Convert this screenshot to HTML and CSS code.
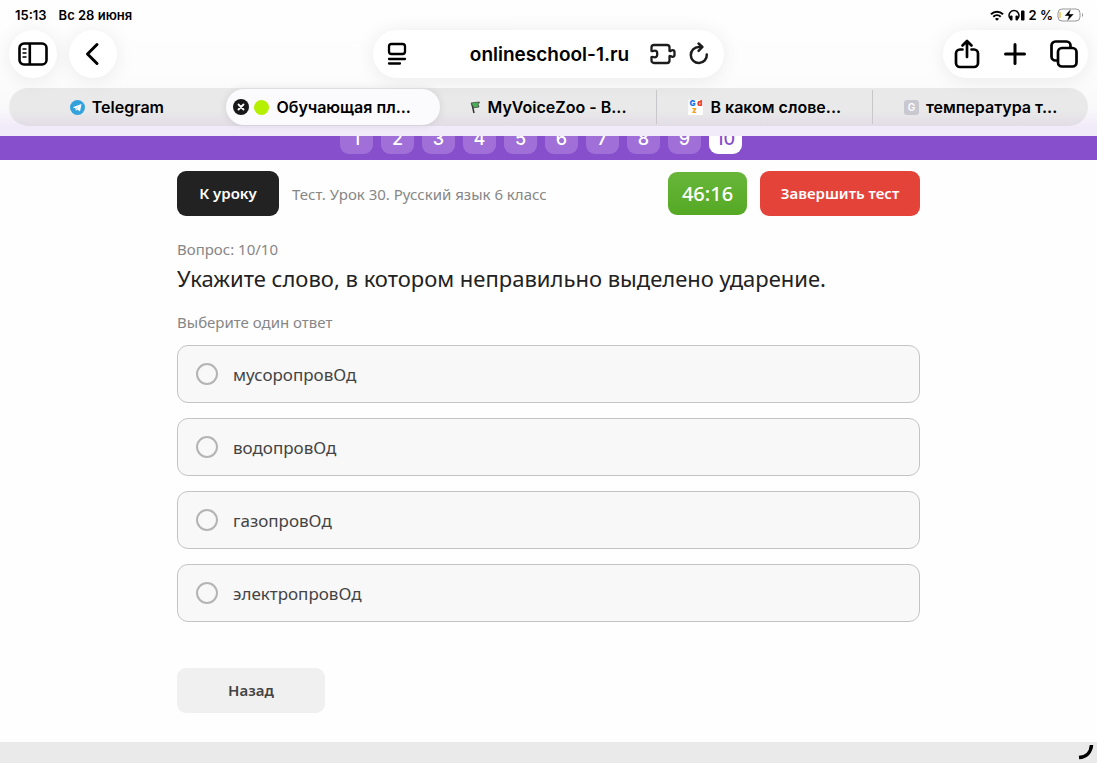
FILE: index.html
```html
<!DOCTYPE html>
<html lang="ru">
<head>
    <meta charset="UTF-8">
    <meta name="viewport" content="width=device-width, initial-scale=1.0">
    <title>Обучающая платформа</title>
    <link rel="stylesheet" href="styles.css">
</head>
<body>
    <header class="browser">
        <div class="status-bar">
            <div class="status-left">
                <span>15:13</span>
                <span>Вс 28 июня</span>
            </div>
            <div class="status-right">
                <svg width="14" height="11" viewBox="0 0 14 11" fill="none" stroke="#000" stroke-width="2">
                    <path d="M1 4.200C4.400.8 9.600.8 13 4.200"/>
                    <path d="M3.300 6.700c2.100-2 5.300-2 7.400 0"/>
                    <path d="M7 10.800 4.900 8.700c1.200-1.100 3-1.100 4.200 0z" fill="#000" stroke="none"/>
                </svg>
                <svg width="17" height="12" viewBox="0 0 17 12">
                    <path d="M3 10.500A5 5 0 1 1 9 10.500" fill="none" stroke="#000" stroke-width="1.500"/>
                    <rect x="2" y="6.500" width="2.500" height="5" rx="1"/>
                    <rect x="7.500" y="6.500" width="2.500" height="5" rx="1"/>
                    <rect x="13" y="1.500" width="3.500" height="10" rx="1"/>
                </svg>
                <span>2 %</span>
                <svg width="27" height="14" viewBox="0 0 27 14">
                    <rect x="1" y="1" width="22" height="12" rx="4" fill="#fff" stroke="#999"/>
                    <path d="M3 4v6" stroke="#f5c542" stroke-width="1.500"/>
                    <path d="M25 5c1.500.5 1.500 3.500 0 4z" fill="#999"/>
                    <path d="M14 .5 7.500 8h4.200L10 13.500 17 6h-4.500z" stroke="#fff" stroke-width=".4"/>
                </svg>
            </div>
        </div>

        <div class="toolbar">
            <div class="toolbar-side">
                <button class="round-button" type="button" aria-label="Боковая панель">
                    <svg width="30" height="24" viewBox="0 0 30 24" fill="none" stroke="#000">
                        <rect x="1.500" y="1.500" width="27" height="21" rx="4.500" stroke-width="2.600"/>
                        <path d="M11.800 2v20" stroke-width="2.600"/>
                        <path d="M4.500 7h4M4.500 11h4M4.500 15h4" stroke-width="1.500"/>
                    </svg>
                </button>
                <button class="round-button" type="button" aria-label="Назад">
                    <svg width="16" height="24" viewBox="0 0 16 24" fill="none" stroke="#000" stroke-width="3" stroke-linecap="round" stroke-linejoin="round">
                        <path d="M12 2.500 2.500 12 12 21.500"/>
                    </svg>
                </button>
            </div>

            <div class="address-bar">
                <button class="icon-button" type="button" aria-label="Меню страницы">
                    <svg width="20" height="24" viewBox="0 0 20 24" fill="none" stroke="#000" stroke-width="2.300" stroke-linecap="round">
                        <rect x="2" y="2" width="16" height="10" rx="2.500"/>
                        <path d="M2 17h16M2 21.500h11"/>
                    </svg>
                </button>
                <span class="address">onlineschool-1.ru</span>
                <div class="address-actions">
                    <button class="icon-button" type="button" aria-label="Расширения">
                        <svg width="26" height="22" viewBox="0 0 26 22" fill="none" stroke="#1c1c1c" stroke-width="2.300" stroke-linejoin="round">
                            <path d="M4 2h13a2.500 2.500 0 0 1 2.500 2.500V8c1.300.4 1.500-.8 3-.8a2 2 0 0 1 2 2v2.600a2 2 0 0 1-2 2c-1.500 0-1.700-1.200-3-.8v4.500a2.500 2.500 0 0 1-2.500 2.500H4a2.500 2.500 0 0 1-2.500-2.500V14c1.300-.6 1.700.3 3.200.3a2.500 2.500 0 0 0 2.500-2.500v-1.600a2.500 2.500 0 0 0-2.500-2.500c-1.500 0-1.900.9-3.200.3V4.500A2.500 2.500 0 0 1 4 2z"/>
                        </svg>
                    </button>
                    <button class="icon-button" type="button" aria-label="Обновить">
                        <svg width="20" height="24" viewBox="0 0 20 24" fill="none" stroke="#1c1c1c" stroke-width="2.500" stroke-linecap="round" stroke-linejoin="round">
                            <path d="M17.800 12.500A8 8 0 1 1 9.800 5h3.200"/>
                            <path d="M9.600 1.500 13.300 5 9.600 8.800"/>
                        </svg>
                    </button>
                </div>
            </div>

            <div class="toolbar-side toolbar-right">
                <div class="action-group">
                    <button class="icon-button" type="button" aria-label="Поделиться">
                        <svg width="26" height="30" viewBox="0 0 26 30" fill="none" stroke="#000" stroke-width="2.700" stroke-linecap="round" stroke-linejoin="round">
                            <path d="M8.500 10.500H6a4 4 0 0 0-4 4V24a4 4 0 0 0 4 4h14a4 4 0 0 0 4-4v-9.500a4 4 0 0 0-4-4h-2.500"/>
                            <path d="M13 18V2M8.500 6.500 13 2l4.500 4.500"/>
                        </svg>
                    </button>
                    <button class="icon-button" type="button" aria-label="Новая вкладка">
                        <svg width="22" height="22" viewBox="0 0 22 22" stroke="#000" stroke-width="3" stroke-linecap="round">
                            <path d="M11 1.500v19M1.500 11h19"/>
                        </svg>
                    </button>
                    <button class="icon-button" type="button" aria-label="Вкладки">
                        <svg width="28" height="28" viewBox="0 0 28 28" fill="none" stroke="#000" stroke-width="2.700">
                            <path d="M8 20.500H5.500a4 4 0 0 1-4-4v-11a4 4 0 0 1 4-4h11a4 4 0 0 1 4 4V8"/>
                            <rect x="8" y="8" width="18.500" height="18.500" rx="4"/>
                        </svg>
                    </button>
                </div>
            </div>
        </div>

        <nav class="tabs">
            <a class="tab" href="#">
                <svg width="15" height="15" viewBox="0 0 15 15">
                    <circle cx="7.500" cy="7.500" r="7.500" fill="#32a1dc"/>
                    <path d="M2.800 7.300 11.500 4 10 11.400 7.300 9.500 5.900 10.800 5.600 8.500z" fill="#fff"/>
                    <path d="M5.800 8.500 9.800 5.600 6.600 9z" fill="#9fcfeb"/>
                </svg>
                <span>Telegram</span>
            </a>
            <a class="tab active" href="#">
                <svg class="tab-close" width="16" height="16" viewBox="0 0 16 16">
                    <circle cx="8" cy="8" r="8" fill="#171719"/>
                    <path d="m5.500 5.500 5 5m0-5-5 5" stroke="#fff" stroke-width="1.800" stroke-linecap="round"/>
                </svg>
                <svg width="15" height="15" viewBox="0 0 15 15">
                    <circle cx="7.500" cy="7.500" r="7.500" fill="#b4f000"/>
                </svg>
                <span>Обучающая пл...</span>
            </a>
            <a class="tab" href="#">
                <svg width="10" height="15" viewBox="0 0 10 15">
                    <path d="M2 4 4 13" stroke="#333" stroke-width="1.500"/>
                    <path d="m1 3 3.500-.5L9.500 2 8.200 4.500l.8 2.500-5.500.8z" fill="#4eae58" stroke="#333" stroke-width=".7"/>
                </svg>
                <span>MyVoiceZoo - В...</span>
            </a>
            <a class="tab divided" href="#">
                <span class="favicon-gdz"><b class="blue">G</b><b class="red">d</b><b class="orange">z</b></span>
                <span>В каком слове...</span>
            </a>
            <a class="tab divided" href="#">
                <span class="favicon-letter">G</span>
                <span>температура т...</span>
            </a>
        </nav>
    </header>

    <nav class="question-nav" aria-label="Вопросы">
        <a href="#">1</a>
        <a href="#">2</a>
        <a href="#">3</a>
        <a href="#">4</a>
        <a href="#">5</a>
        <a href="#">6</a>
        <a href="#">7</a>
        <a href="#">8</a>
        <a href="#">9</a>
        <a class="current" href="#">10</a>
    </nav>

    <main class="test">
        <div class="test-header">
            <button class="button dark" type="button">К уроку</button>
            <span class="test-name">Тест. Урок 30. Русский язык 6 класс</span>
            <div class="timer">46:16</div>
            <button class="button danger" type="button">Завершить тест</button>
        </div>

        <p class="question-number">Вопрос: 10/10</p>
        <h1>Укажите слово, в котором неправильно выделено ударение.</h1>

        <form>
            <p class="hint">Выберите один ответ</p>
            <div class="answers">
                <label class="answer">
                    <input type="radio" name="answer">
                    <span>мусоропровОд</span>
                </label>
                <label class="answer">
                    <input type="radio" name="answer">
                    <span>водопровОд</span>
                </label>
                <label class="answer">
                    <input type="radio" name="answer">
                    <span>газопровОд</span>
                </label>
                <label class="answer">
                    <input type="radio" name="answer">
                    <span>электропровОд</span>
                </label>
            </div>
            <button class="button light" type="button">Назад</button>
        </form>
    </main>

    <footer class="page-footer">
        <svg width="16" height="17" viewBox="0 0 16 17" fill="none" stroke="#000" stroke-width="3.500">
            <path d="M13.500 1C13 8 8.500 13 1 13.500"/>
        </svg>
    </footer>
</body>
</html>
```

FILE: styles.css
```css
:root {
    --purple: #874fcc;
    --text: #222;
    --muted: #868686;
    --border: #c4c4c4;
}

* {
    margin: 0;
    padding: 0;
    box-sizing: border-box;
}

body {
    min-height: 100vh;
    display: flex;
    flex-direction: column;
    background: #fefefe;
    color: var(--text);
    font-family: "Noto Sans", sans-serif;
}

a {
    color: inherit;
    text-decoration: none;
}

button {
    border: 0;
    background: none;
    font-family: inherit;
    cursor: pointer;
}

svg {
    display: block;
    flex-shrink: 0;
}

/* Browser */
.browser {
    padding: 0 9px 10px;
    background: linear-gradient(#fefefe 0, #fdfdfd 70px, #f9f9fa 108px, #f1eaf9 128px, #f1eaf9 100%);
    color: #000;
    font-family: Inter, sans-serif;
}

.status-bar {
    height: 30px;
    padding: 0 4px 0 6px;
    display: flex;
    align-items: center;
    justify-content: space-between;
    font-size: 13px;
    font-weight: 600;
}

.status-left {
    display: flex;
    gap: 12px;
}

.status-right {
    display: flex;
    align-items: center;
    gap: 4px;
}

.toolbar {
    display: flex;
    align-items: center;
    justify-content: space-between;
}

.toolbar-side {
    flex: 1;
    display: flex;
    gap: 12px;
}

.toolbar-right {
    justify-content: flex-end;
}

.round-button,
.address-bar,
.action-group {
    height: 48px;
    display: flex;
    align-items: center;
    background: #fff;
    border-radius: 24px;
    box-shadow: 0 2px 20px rgba(0,0,0,0.08);
}

.round-button {
    width: 48px;
    justify-content: center;
}

.address-bar {
    flex: 0 1 351px;
    justify-content: space-between;
    padding: 0 15px 0 14px;
}

.address {
    padding-left: 42px;
    font-size: 19px;
    font-weight: 600;
}

.address-actions {
    display: flex;
    align-items: center;
    gap: 13px;
}

.action-group {
    width: 145px;
    justify-content: space-between;
    padding: 0 10px 0 11px;
}

.tabs {
    height: 38px;
    margin-top: 10px;
    display: grid;
    grid-template-columns: repeat(5, 1fr);
    align-items: center;
    background: linear-gradient(#e9e9e9 60%, #e1dde6);
    border-radius: 19px;
}

.tab {
    position: relative;
    height: 34px;
    display: flex;
    align-items: center;
    justify-content: center;
    gap: 7px;
    border-radius: 18px;
    font-size: 16px;
    font-weight: 600;
    white-space: nowrap;
}

.tab.active {
    margin: 0 1px;
    height: 36px;
    background: #fbfafc;
    box-shadow: 0 0 8px rgba(0,0,0,0.1);
}

.tab-close {
    position: absolute;
    left: 7px;
}

.tab.divided {
    border-left: 1px solid #c8c8ca;
    border-radius: 0;
}

.favicon-gdz,
.favicon-letter {
    width: 15px;
    height: 15px;
    text-align: center;
}

.favicon-gdz {
    display: grid;
    grid-template-columns: 8px 7px;
    background: #fff;
    font-size: 8px;
    line-height: 7px;
}

.blue {
    color: #1677e8;
}

.red {
    color: #ee3028;
}

.orange {
    grid-column: span 2;
    padding-right: 3px;
    color: #f5a21b;
}

.favicon-letter {
    background: #c9c8d1;
    border-radius: 3px;
    color: #fff;
    font-size: 10px;
    line-height: 15px;
}

/* Question numbers */
.question-nav {
    height: 24px;
    padding: 0 15px 6px 0;
    display: flex;
    align-items: flex-end;
    justify-content: center;
    gap: 8px;
    overflow: hidden;
    background: var(--purple);
}

.question-nav a {
    width: 33px;
    height: 33px;
    flex-shrink: 0;
    border-radius: 9px;
    background: #a070d8;
    color: #fff;
    font-family: Inter, sans-serif;
    font-size: 18px;
    font-weight: 500;
    line-height: 36px;
    text-align: center;
}

.question-nav .current {
    background: #fff;
    color: var(--purple);
}

/* Test */
.test {
    flex: 1;
    width: 100%;
    max-width: 743px;
    margin: 0 auto;
    padding: 11px 0 29px;
}

.test-header {
    display: flex;
    align-items: center;
}

.button {
    height: 45px;
    padding-bottom: 2px;
    border-radius: 9px;
    font-size: 15px;
    font-weight: 600;
}

.dark {
    width: 102px;
    background: #222;
    color: #fff;
}

.danger {
    width: 160px;
    background: #e4433a;
    color: #fff;
}

.light {
    width: 148px;
    margin-top: 46px;
    background: #f0f0f0;
    color: #444;
}

.test-name {
    margin: 0 auto 0 13px;
    color: var(--muted);
    font-size: 15px;
}

.timer {
    width: 79px;
    margin-right: 13px;
    background: linear-gradient(#68b63a, #55a924);
    border-radius: 9px;
    color: #fff;
    font-size: 20px;
    font-weight: 500;
    line-height: 43px;
    text-align: center;
}

.question-number,
.hint {
    color: var(--muted);
    font-size: 15px;
    line-height: 20px;
}

.question-number {
    margin-top: 23px;
}

h1 {
    margin-top: 4px;
    font-size: 22px;
    font-weight: 400;
    line-height: 30px;
}

.hint {
    margin-top: 19px;
}

.answers {
    margin-top: 13px;
    display: grid;
    gap: 15px;
}

.answer {
    height: 58px;
    padding: 0 18px;
    display: flex;
    align-items: center;
    gap: 15px;
    background: #f8f8f8;
    border: 1px solid var(--border);
    border-radius: 11px;
    color: #444;
    font-size: 17px;
    cursor: pointer;
}

.answer input {
    appearance: none;
    width: 22px;
    height: 22px;
    border: 2px solid #b4b4b4;
    border-radius: 50%;
}

.answer input:checked {
    border: 6px solid var(--purple);
}

.page-footer {
    height: 21px;
    padding: 2px 3px;
    display: flex;
    justify-content: flex-end;
    background: #eaeaea;
}
```
